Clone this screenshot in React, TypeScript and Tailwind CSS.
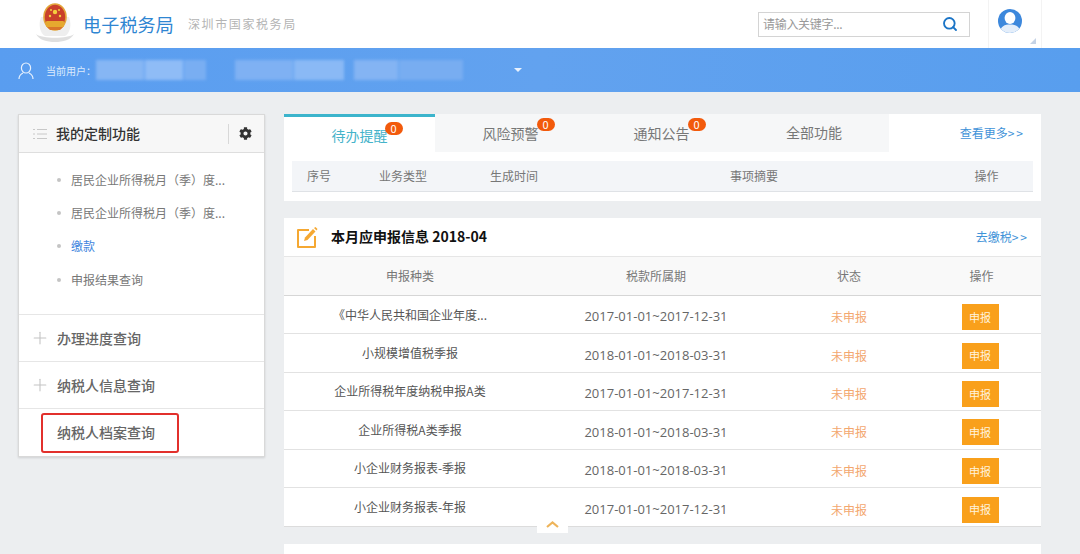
import { Search, Plus } from "lucide-react";
import { FaCog } from "react-icons/fa";

const FONT = { fontFamily: '"Noto Sans CJK SC", "Noto Sans", sans-serif' };

const rows = [
  ["《中华人民共和国企业年度...", "2017-01-01~2017-12-31"],
  ["小规模增值税季报", "2018-01-01~2018-03-31"],
  ["企业所得税年度纳税申报A类", "2017-01-01~2017-12-31"],
  ["企业所得税A类季报", "2018-01-01~2018-03-31"],
  ["小企业财务报表-季报", "2018-01-01~2018-03-31"],
  ["小企业财务报表-年报", "2017-01-01~2017-12-31"],
];

function Emblem() {
  return (
    <svg width="38" height="39" viewBox="0 0 38 39" className="shrink-0">
      <path d="M0 31 C6 36 32 36 38 31 C35 37 27 39 19 39 C11 39 3 37 0 31Z" fill="#dfdfdf" />
      <path d="M5 14 C2 22 4 30 9 33 L29 33 C34 30 36 22 33 14Z" fill="#eeeeee" />
      <ellipse cx="19" cy="14" rx="11" ry="13" fill="#c9402a" />
      <ellipse cx="19" cy="14" rx="11" ry="13" fill="none" stroke="#e3a63a" strokeWidth="1.6" />
      <rect x="10" y="18" width="18" height="6" rx="1" fill="#e6a92f" />
      <path d="M11 24 H27 L24 27 H14Z" fill="#d9762a" />
      <circle cx="19" cy="9" r="2.2" fill="#f4d03f" />
      <circle cx="14" cy="13" r="1.2" fill="#f4d03f" />
      <circle cx="24" cy="13" r="1.2" fill="#f4d03f" />
      <circle cx="15" cy="7" r="1" fill="#f4d03f" />
      <circle cx="23" cy="7" r="1" fill="#f4d03f" />
    </svg>
  );
}

function Avatar() {
  return (
    <svg width="24" height="25" viewBox="0 0 24 25">
      <defs>
        <clipPath id="av">
          <circle cx="12" cy="12" r="12" />
        </clipPath>
      </defs>
      <circle cx="12" cy="12" r="12" fill="#3d88dc" />
      <g clipPath="url(#av)">
        <ellipse cx="12" cy="9" rx="5.4" ry="6" fill="#fff" />
        <path d="M2 24 C2 17 7 15.5 12 15.5 C17 15.5 22 17 22 24Z" fill="#e4eefa" />
      </g>
    </svg>
  );
}

function EditIcon() {
  return (
    <svg width="22" height="23" viewBox="0 0 22 23" fill="none">
      <path d="M13 4 H2 V21 H19 V10" stroke="#f5a832" strokeWidth="2" strokeLinejoin="round" />
      <path d="M8 15 L9 11.5 L17 3 L19.5 5.5 L11.5 14Z" fill="#f5a832" />
      <path d="M18 2 L19.5 1 L21.5 3 L20.5 4.5Z" fill="#f5a832" />
    </svg>
  );
}

function ListIcon() {
  return (
    <svg width="14" height="12" viewBox="0 0 14 12" stroke="#c8c8c8" strokeWidth="1">
      <path d="M0 1.5H2M4 1.5H14M0 6H2M4 6H14M0 10.5H2M4 10.5H14" />
    </svg>
  );
}

function Tab({ label, active }: { label: string; active?: boolean }) {
  return (
    <div
      className={
        active
          ? "w-[151px] h-[38px] bg-white border-t-[3px] border-[#3cb4cc] flex justify-center pt-[8px] text-[#45b3ca] text-[14px] leading-[20px]"
          : "w-[151px] h-[38px] bg-[#f6f7f8] flex justify-center pt-[9px] text-[#777] text-[14px] leading-[20px]"
      }
    >
      <span className="relative">
        {label}
        <span
          className={
            active
              ? "absolute left-full -top-[3px] -ml-[3px] w-[18px] h-[13px] rounded-full bg-[#f25a0c] text-white text-[11px] leading-[13px] text-center"
              : "absolute left-full -top-[5px] -ml-[2px] w-[18px] h-[13px] rounded-full bg-[#f25a0c] text-white text-[11px] leading-[13px] text-center"
          }
        >
          0
        </span>
      </span>
    </div>
  );
}

export default function App() {
  return (
    <div className="w-[1080px] h-[554px] overflow-hidden bg-[#eceef0] text-[12px] text-[#666]" style={FONT}>
      <header className="h-[48px] bg-white flex items-center">
        <div className="ml-[36px] -mt-[3px]">
          <Emblem />
        </div>
        <div className="ml-[9px] text-[18px] text-[#2f86d2] tracking-[0.2px]">电子税务局</div>
        <div className="ml-[14px] text-[12px] text-[#b4b4b4] tracking-[1.6px]">深圳市国家税务局</div>
        <div className="ml-auto w-[212px] h-[25px] border border-[#d4d4d4] flex items-center justify-between pl-[4px] pr-[11px] text-[12px] tracking-[-0.3px] text-[#999]">
          <span>请输入关键字...</span>
          <Search size={16} strokeWidth={2.8} className="text-[#1a74c6]" />
        </div>
        <div className="relative ml-[18px] mr-[38px] w-[54px] h-[48px] border-x border-[#f3f3f3] flex justify-center pt-[9px] pr-[10px]">
          <Avatar />
          <span className="absolute right-[5px] bottom-[4px] w-0 h-0 border-l-[6px] border-b-[6px] border-l-transparent border-b-[#c5d3e6]" />
        </div>
      </header>

      <div className="h-[44px] bg-gradient-to-r from-[#599df0] via-[#62a2ef] to-[#589eee] flex items-center">
        <svg width="16" height="17" viewBox="0 0 16 17" fill="none" stroke="#e6f0fd" strokeWidth="1.2" className="ml-[18px]">
          <ellipse cx="8" cy="6" rx="4.6" ry="5" />
          <path d="M1 17 C1 13 4 11.5 5 11 M15 17 C15 13 12 11.5 11 11" />
        </svg>
        <span className="ml-[12px] text-[10px] text-[#dceafc]">当前用户：</span>
        <div className="flex gap-[1px] h-[20px] blur-[1.5px]">
          <div className="w-[48px] bg-[#86b6f4]" />
          <div className="w-[38px] bg-[#8fbcf6]" />
          <div className="w-[22px] bg-[#79aef2]" />
        </div>
        <div className="flex gap-[1px] ml-[29px] h-[20px] blur-[1.5px]">
          <div className="w-[58px] bg-[#7fb1f3]" />
          <div className="w-[50px] bg-[#8ab9f5]" />
        </div>
        <div className="flex gap-[1px] ml-[10px] h-[20px] blur-[1.5px]">
          <div className="w-[44px] bg-[#84b4f3]" />
          <div className="w-[64px] bg-[#78adf1]" />
        </div>
        <span className="ml-[51px] w-0 h-0 border-x-[4px] border-t-[4px] border-x-transparent border-t-[#e8f1fd]" />
      </div>

      <div className="flex items-start pt-[22px] pl-[18px] gap-[19px]">
        <aside className="relative w-[247px] h-[343px] bg-white border border-[#d9d9d9] shadow-[0_1px_2px_rgba(0,0,0,0.12)] flex flex-col shrink-0">
          <div className="h-[38px] bg-[#f7f7f7] border-b border-[#dedede] flex items-center pl-[14px] shrink-0">
            <ListIcon />
            <span className="ml-[9px] text-[14px] font-medium text-[#333]">我的定制功能</span>
            <div className="ml-auto mr-[10px] h-[20px] border-l border-[#d8d8d8]" />
            <FaCog size={13} className="text-[#333] mr-[12px]" />
          </div>
          <ul className="h-[161px] pt-[10px] shrink-0">
            {["居民企业所得税月（季）度...", "居民企业所得税月（季）度...", "缴款", "申报结果查询"].map((t, i) => (
              <li key={i} className="h-[33.3px] flex items-center pl-[38px]">
                <span className="w-[4px] h-[4px] rounded-full bg-[#c4c4c4]" />
                <span className={i === 2 ? "ml-[10px] text-[#3f86de]" : "ml-[10px] text-[#777]"}>{t}</span>
              </li>
            ))}
          </ul>
          <div className="h-[47px] border-t border-[#e6e6e6] flex items-center pl-[11px] shrink-0">
            <Plus size={20} strokeWidth={1.3} className="text-[#c4c4c4]" />
            <span className="ml-[7px] text-[14px] font-medium text-[#666]">办理进度查询</span>
          </div>
          <div className="h-[47px] border-t border-[#e6e6e6] flex items-center pl-[11px] shrink-0">
            <Plus size={20} strokeWidth={1.3} className="text-[#c4c4c4]" />
            <span className="ml-[7px] text-[14px] font-medium text-[#666]">纳税人信息查询</span>
          </div>
          <div className="h-[48px] border-t border-[#e6e6e6] flex items-center pl-[38px]">
            <span className="text-[14px] font-medium text-[#666]">纳税人档案查询</span>
          </div>
          <div className="absolute left-[22px] top-[298px] w-[138px] h-[40px] border-2 border-[#e2302c] rounded-[3px]" />
        </aside>

        <main className="w-[757px] shrink-0 flex flex-col">
          <section className="h-[87px] bg-white">
            <div className="flex items-center h-[38px]">
              <Tab label="待办提醒" active />
              <Tab label="风险预警" />
              <Tab label="通知公告" />
              <div className="w-[152px] h-[38px] bg-[#f6f7f8] flex items-center justify-center pl-[2px] pb-[2px] text-[14px] text-[#777]">全部功能</div>
              <a className="ml-auto mr-[16px] text-[12px] text-[#3f93d8]">
                查看更多<span className="tracking-[2px]">&gt;&gt;</span>
              </a>
            </div>
            <div className="mx-[8px] mt-[9px] h-[31px] bg-[#f3f5f8] border-b border-[#dfe2e6] grid grid-cols-[54px_114px_108px_372px_93px] items-center text-center text-[12px] text-[#777]">
              <span>序号</span>
              <span>业务类型</span>
              <span>生成时间</span>
              <span>事项摘要</span>
              <span>操作</span>
            </div>
          </section>

          <section className="relative mt-[17px] bg-white border-b border-[#dcdcdc]">
            <div className="h-[38px] flex items-center pl-[12px] pr-[12px]">
              <EditIcon />
              <span className="ml-[13px] -mt-[1px] text-[14px] font-bold text-[#111]">本月应申报信息 2018-04</span>
              <a className="ml-auto text-[12px] text-[#3f93d8]">
                去缴税<span className="tracking-[2px]">&gt;&gt;</span>
              </a>
            </div>
            <div className="h-[40px] bg-[#f9f9f9] border-t border-b border-[#e6e6e6] border-b-[#d6d6d6] grid grid-cols-[252px_240px_146px_119px] items-center text-center text-[12px] text-[#777]">
              <span>申报种类</span>
              <span>税款所属期</span>
              <span>状态</span>
              <span>操作</span>
            </div>
            {rows.map(([name, period], i) => (
              <div
                key={i}
                className={
                  i === rows.length - 1
                    ? "h-[38.4px] pt-[5px] grid grid-cols-[252px_240px_146px_119px] items-center text-center"
                    : "h-[38.4px] pt-[5px] border-b border-[#e2e2e2] grid grid-cols-[252px_240px_146px_119px] items-center text-center"
                }
              >
                <span className="text-[12px] text-[#555] -mt-[5px]">{name}</span>
                <span className="text-[13px] text-[#666]" style={{ fontFamily: '"Open Sans", sans-serif' }}>
                  {period}
                </span>
                <span className="text-[12px] text-[#f3a76f]">未申报</span>
                <div className="flex justify-center pr-[3px]">
                  <button className="w-[37px] h-[26px] bg-[#f9a01b] text-[11px] text-[#fff3dd]">申报</button>
                </div>
              </div>
            ))}
            <div className="absolute left-[253px] -bottom-[7px] w-[31px] h-[8px] bg-white">
              <svg width="13" height="7" viewBox="0 0 13 7" fill="none" className="absolute left-[9px] -top-[4px]">
                <path d="M1 6 L6.5 1.5 L12 6" stroke="#eeb45a" strokeWidth="2.2" />
              </svg>
            </div>
          </section>

          <section className="mt-[17px] h-[40px] bg-white" />
        </main>
      </div>
    </div>
  );
}
